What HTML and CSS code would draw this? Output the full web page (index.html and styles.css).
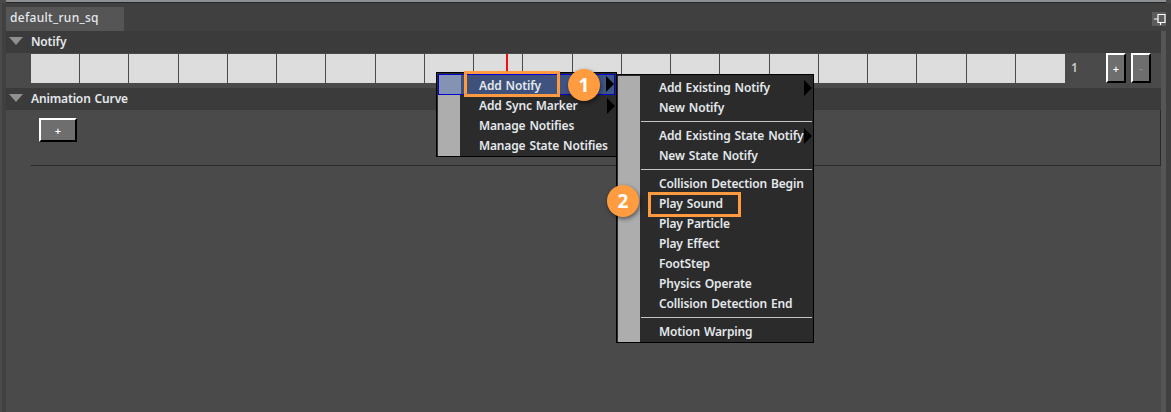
FILE: index.html
```html
<!DOCTYPE html>
<html lang="en">
<head>
<meta charset="utf-8">
<title>default_run_sq</title>
<link rel="stylesheet" href="styles.css">
</head>
<body>
<div class="topline"></div>
<main class="shell">
  <div class="tabbar">
    <div class="tab">default_run_sq</div>
    <div class="pin"><svg width="14" height="14" viewBox="0 0 14 14"><path d="M2 7H6M6 2.500H13V10.500H6ZM8.500 10.500V13" fill="none" stroke="#fff" stroke-width="1.200"/></svg></div>
  </div>
  <div class="body-wrap">
    <section class="group">
      <header class="group-head"><i class="tri"></i><span>Notify</span></header>
      <div class="track-row">
        <div class="timeline">
          <i></i><i></i><i></i><i></i><i></i><i></i><i></i><i></i><i></i><i></i><i></i>
          <i></i><i></i><i></i><i></i><i></i><i></i><i></i><i></i><i></i><i></i>
          <b class="playhead"></b>
        </div>
        <span class="count">1</span>
        <button class="bevel small">+</button>
        <button class="bevel small dim">-</button>
      </div>
    </section>
    <section class="group">
      <header class="group-head"><i class="tri"></i><span>Animation Curve</span></header>
      <div class="curve-row">
        <button class="bevel wide">+</button>
      </div>
    </section>
  </div>
</main>

<nav class="menu menu-two">
  <div class="item">Add Existing Notify<i class="arrow"></i></div>
  <div class="item">New Notify</div>
  <hr>
  <div class="item">Add Existing State Notify<i class="arrow"></i></div>
  <div class="item">New State Notify</div>
  <hr>
  <div class="item">Collision Detection Begin</div>
  <div class="item">Play Sound</div>
  <div class="item">Play Particle</div>
  <div class="item">Play Effect</div>
  <div class="item">FootStep</div>
  <div class="item">Physics Operate</div>
  <div class="item">Collision Detection End</div>
  <hr>
  <div class="item">Motion Warping</div>
</nav>

<nav class="menu menu-one">
  <div class="item active">Add Notify<i class="arrow"></i></div>
  <div class="item">Add Sync Marker<i class="arrow"></i></div>
  <div class="item">Manage Notifies</div>
  <div class="item">Manage State Notifies</div>
</nav>

<div class="callout box-one"></div>
<div class="callout box-two"></div>
<div class="badge badge-one">1</div>
<div class="badge badge-two">2</div>
</body>
</html>
```
FILE: styles.css
```css
* { box-sizing: border-box; }
html, body { margin: 0; height: 100%; overflow: hidden; }
body {
  position: relative;
  width: 1171px;
  height: 412px;
  background: #4a4a4a;
  font-family: "Noto Sans", "Open Sans", sans-serif;
  font-size: 12px;
  font-weight: 600;
  color: #e4e8ec;
}
.topline {
  height: 3px;
  margin-left: 6px;
  background: #8d9194;
  border-bottom: 1px solid #262626;
  margin-right: 5px;
}
.shell {
  height: 409px;
  margin-left: 2px;
  padding-left: 4px;
  padding-right: 5px;
  background: #404040;
  display: flex;
  flex-direction: column;
}
.tabbar {
  height: 28px;
  flex: none;
  display: flex;
  align-items: flex-end;
  justify-content: space-between;
  background: #404040;
  position: relative;
}
.tab {
  width: 118px;
  height: 24px;
  padding-left: 4px;
  background: #555555;
  line-height: 21px;
  font-size: 12px;
  font-weight: 500;
  letter-spacing: 0.3px;
}
.pin {
  width: 14px;
  height: 14px;
  margin-bottom: 5px;
  background: #5c5c5c;
  display: flex;
}
.body-wrap {
  flex: 1;
  background: #4a4a4a;
  border-right: 5px solid #555555;
  display: flex;
  flex-direction: column;
}
.group-head {
  height: 22px;
  background: #3b3b3b;
  display: flex;
  align-items: center;
  padding-left: 3px;
}
.group-head span { margin-left: 8px; line-height: 20px; margin-top: -1px; letter-spacing: -0.15px; word-spacing: 1px; }
.tri {
  width: 0;
  height: 0;
  border-left: 7px solid transparent;
  border-right: 7px solid transparent;
  border-top: 8px solid #909090;
  margin-top: -3px;
}
.track-row {
  height: 35px;
  padding-left: 25px;
  display: flex;
  align-items: flex-start;
  padding-top: 1px;
}
.timeline {
  position: relative;
  width: 1034px;
  height: 29px;
  display: grid;
  grid-template-columns: repeat(21, 1fr);
}
.timeline i {
  background: #dddddd;
  border-right: 1px solid #4a4a4a;
}
.timeline i:nth-last-of-type(1) { border-right: 0; }
.playhead {
  position: absolute;
  left: 475px;
  top: 0;
  width: 2px;
  height: 29px;
  background: #f01010;
}
.count {
  width: 41px;
  padding-left: 6px;
  line-height: 27px;
  color: #c8ccd0;
}
.bevel {
  padding: 0;
  border: 2px solid;
  border-color: #fff #000 #000 #fff;
  background: #6e6e6e;
  color: #fff;
  font: inherit;
  font-size: 11px;
  line-height: 1;
}
.small { width: 20px; height: 30px; margin-top: -1px; }
.small + .small { margin-left: 5px; }
.dim { color: #8c8c8c; }
.curve-row {
  height: 56px;
  margin-left: 25px;
  padding: 8px 0 0 8px;
  border-bottom: 1px solid #2a2a2a;
  border-right: 1px solid #2a2a2a;
}
.wide { display: block; width: 38px; height: 24px; }

.menu {
  position: absolute;
  z-index: 1;
  background: #2b2b2b;
  border: 1px solid #000;
  padding: 1px;
  background-clip: padding-box;
}
.menu::before {
  content: "";
  position: absolute;
  left: 1px;
  top: 1px;
  bottom: 0;
  width: 22px;
  background: #adadad;
}
.menu-one { left: 436px; top: 72px; width: 181px; height: 85px; }
.menu-two { left: 616px; top: 74px; width: 198px; height: 269px; padding-top: 3px; }
.item {
  position: relative;
  height: 20px;
  line-height: 19px;
  padding-left: 41px;
  white-space: nowrap;
  letter-spacing: -0.15px;
  word-spacing: 1px;
}
.active {
  height: 21px;
  margin-bottom: 1px;
  line-height: 22px;
  padding-left: 40px;
  border: 1px solid #0000d0;
  background: linear-gradient(90deg, #8492b4 0, #8492b4 22px, #3f5078 22px, #3f5586 100%);
}
.arrow {
  position: absolute;
  right: 0;
  top: 2px;
  width: 0;
  height: 0;
  border-top: 8px solid transparent;
  border-bottom: 8px solid transparent;
  border-left: 8px solid #000;
}
.active .arrow { right: 0; top: 1px; }
.menu hr {
  position: relative;
  margin: 3px 0 4px 23px;
  width: 171px;
  height: 1px;
  border: 0;
  background: #c4c4c4;
}
.callout {
  position: absolute;
  z-index: 2;
  border: 3px solid #ff9a3e;
}
.box-one { left: 464px; top: 71px; width: 96px; height: 26px; }
.box-two { left: 648px; top: 192px; width: 93px; height: 25px; }
.badge {
  position: absolute;
  z-index: 3;
  width: 32px;
  height: 32px;
  border-radius: 50%;
  background: #ff9c40;
  color: #fff;
  font-size: 19px;
  font-weight: 700;
  line-height: 32px;
  text-align: center;
  box-shadow: 1px 2px 4px rgba(0,0,0,.5);
}
.badge-one { left: 568px; top: 69px; }
.badge-two { left: 607px; top: 185px; }
```
